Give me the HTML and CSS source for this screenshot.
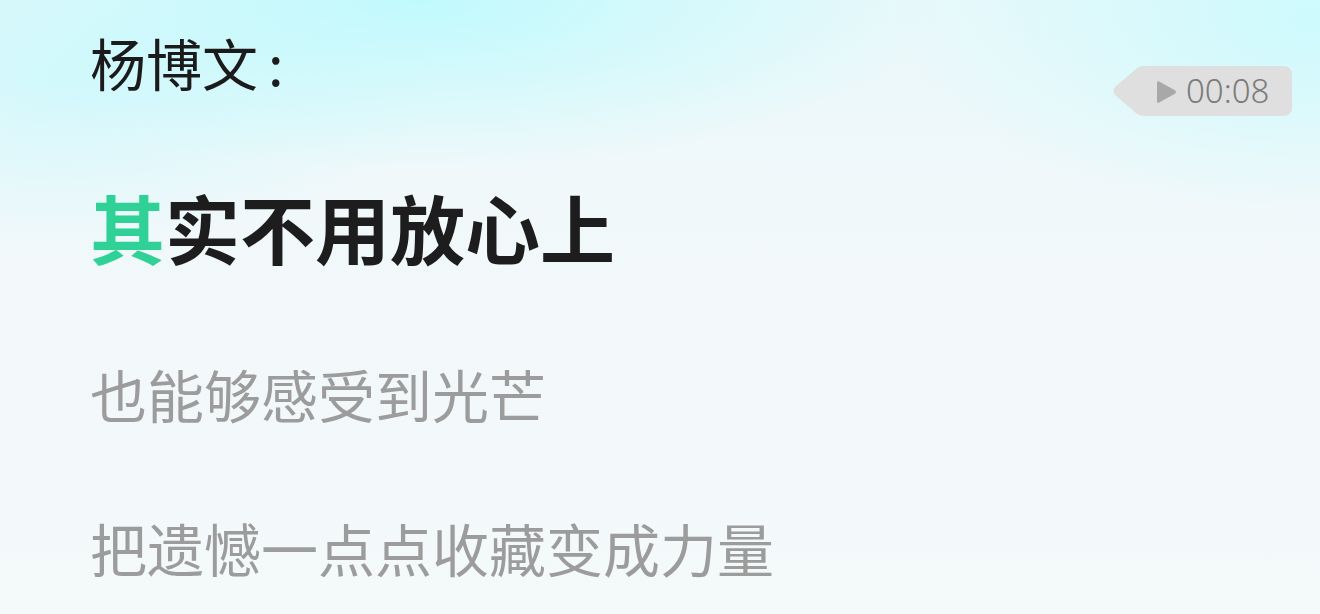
FILE: index.html
```html
<!DOCTYPE html>
<html lang="zh-CN">
<head>
<meta charset="utf-8">
<link rel="stylesheet" href="styles.css">
</head>
<body>
<div class="page">
  <div class="header">
    <div class="speaker">杨博文<span class="colon">:</span></div>
    <div class="badge">
      <svg class="badge-bg" width="180" height="50" viewBox="0 0 180 50"><path d="M31 0 H171 Q180 0 180 9 V41 Q180 50 171 50 H31 Q27 50 24 47 L3 29 Q0 25 3 21 L24 3 Q27 0 31 0 Z" fill="#dfdfdf"/></svg>
      <svg class="play" width="22" height="24" viewBox="0 0 22 24"><path d="M2 2.8 Q2 0.5 4.2 1.6 L20.3 10.5 Q22 12 20.3 13.5 L4.2 22.4 Q2 23.5 2 21.2 Z" fill="#a8a8a8"/></svg>
      <span class="time">00:08</span>
    </div>
  </div>
  <div class="line current"><span class="hl">其</span>实不用放心上</div>
  <div class="line next first">也能够感受到光芒</div>
  <div class="line next second">把遗憾一点点收藏变成力量</div>
</div>
</body>
</html>
```

FILE: styles.css
```css
html, body {
  margin: 0;
  padding: 0;
}
body {
  width: 1320px;
  height: 614px;
  overflow: hidden;
  font-family: "Noto Sans CJK SC", "Noto Sans", sans-serif;
  background:
    radial-gradient(ellipse 520px 170px at 420px 0px, rgba(190,250,253,0.95), rgba(190,250,253,0) 100%),
    radial-gradient(ellipse 420px 200px at 1320px 20px, rgba(200,250,253,0.85), rgba(200,250,253,0) 100%),
    radial-gradient(ellipse 380px 170px at 60px 80px, rgba(205,248,252,0.8), rgba(205,248,252,0) 100%),
    linear-gradient(180deg, #e9f8fa 0px, #f1f8fa 200px, #f4f9fa 614px);
}
.page {
  padding: 34px 28px 0 90px;
}
.header {
  display: flex;
  justify-content: space-between;
  align-items: flex-start;
  height: 56px;
}
.speaker {
  font-size: 56px;
  line-height: 56px;
  color: #1b1b1b;
  font-weight: 400;
}
.colon {
  margin-left: 10px;
}
.badge {
  position: relative;
  margin-top: 32px;
  width: 180px;
  height: 50px;
  display: flex;
  align-items: center;
  box-sizing: border-box;
  padding-left: 43px;
}
.badge-bg {
  position: absolute;
  left: 0;
  top: 0;
}
.play {
  position: relative;
  margin-top: 1px;
}
.time {
  position: relative;
  margin-left: 9px;
  font-family: "Noto Sans", sans-serif;
  font-size: 33px;
  line-height: 50px;
  color: #7b7b7b;
  font-weight: 300;
}
.line {
  line-height: 1;
}
.current {
  margin-top: 99px;
  font-size: 75px;
  font-weight: 700;
  color: #1d1d1d;
}
.hl {
  color: #30d196;
}
.next {
  font-size: 57px;
  color: #9c9c9c;
}
.first {
  margin-top: 101px;
}
.second {
  margin-top: 97px;
}
```
